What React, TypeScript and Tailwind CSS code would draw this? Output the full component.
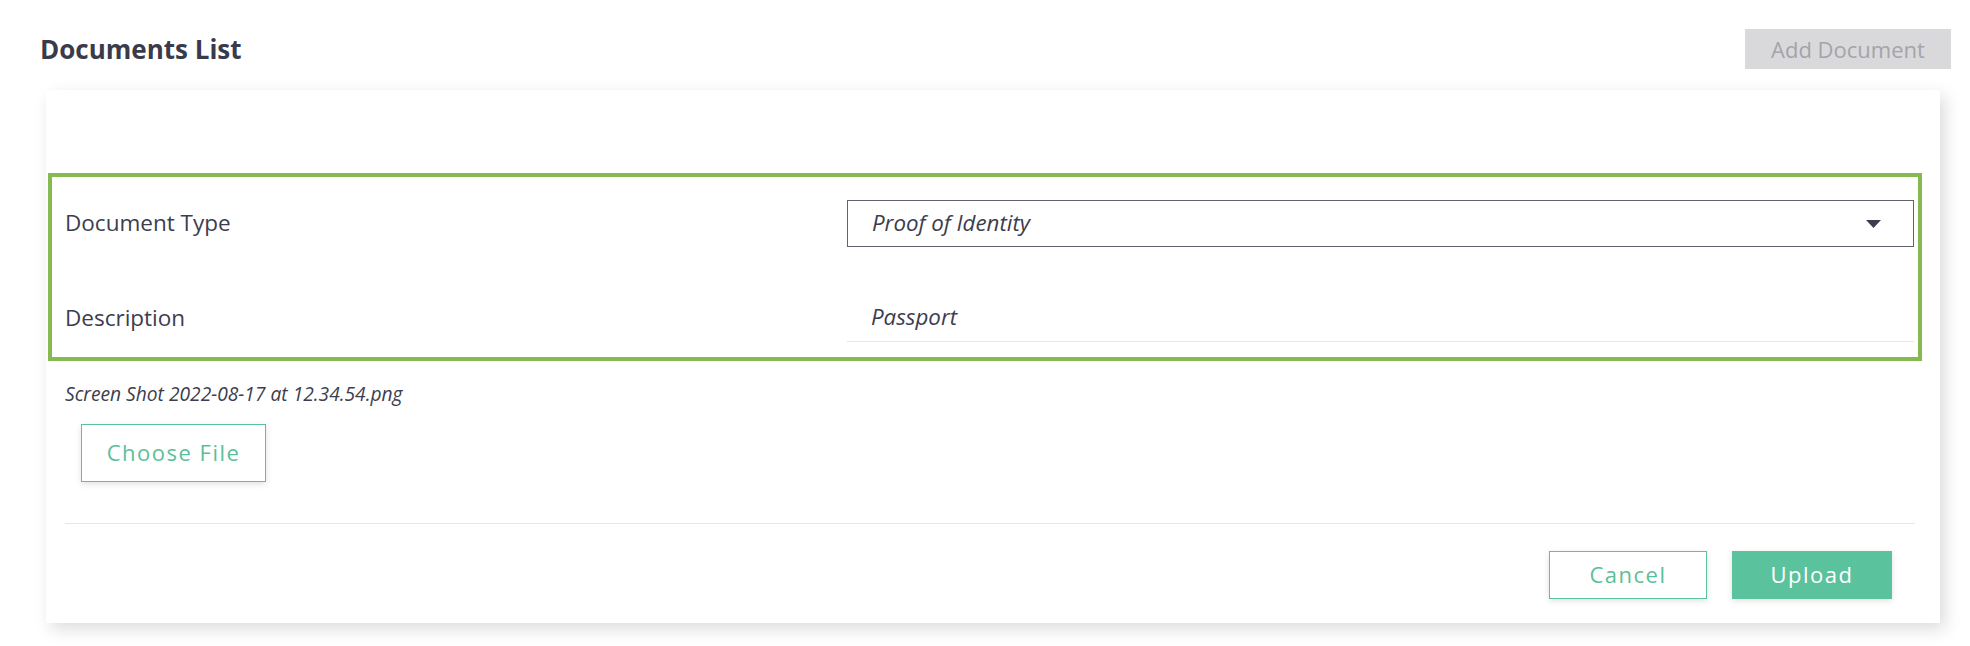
import React from "react";

export default function App() {
  return (
    <div className="w-[1970px] h-[646px] bg-white font-['Open_Sans',sans-serif] overflow-hidden">
      <div className="flex items-center justify-between pl-[40px] pr-[19px] pt-[29px]">
        <h1 className="text-[26px] font-bold leading-none text-[#3a3b4a]">Documents List</h1>
        <button className="w-[206px] h-[40px] bg-[#d9d9db] text-[#a4a4a9] text-[22px] leading-none">
          Add Document
        </button>
      </div>

      <div className="mt-[21px] ml-[46px] w-[1894px] bg-white pt-[83px] pl-[19px] pr-[25px] pb-[24px] shadow-[5px_6px_16px_rgba(0,0,0,0.14)]">
        <div className="ml-[-17px] mr-[-7px] border-4 border-[#86b94f] pt-[23px] pb-[15px] pl-[13px] pr-[4px]">
          <div className="grid grid-cols-[782px_1fr] items-center">
            <div className="text-[22.5px] text-[#3c3d4e] leading-none mt-[-1px]">Document Type</div>
            <div className="h-[47px] border border-[#62626e] pl-[24px] pr-[32px] flex items-center justify-between">
              <span className="text-[22.3px] italic text-[#3c3d4e] leading-none">Proof of Identity</span>
              <svg width="15" height="8" viewBox="0 0 15 8" className="block">
                <path d="M0 0 H15 L7.5 8 Z" fill="#3c3d4e" />
              </svg>
            </div>
          </div>
          <div className="grid grid-cols-[782px_1fr] items-center mt-[48px]">
            <div className="text-[22.5px] text-[#3c3d4e] leading-none mt-[-1px]">Description</div>
            <div className="h-[47px] border-b border-[#e6e6e6] pl-[24px] flex items-center">
              <span className="text-[22.3px] italic text-[#3c3d4e] leading-none mt-[-1px]">Passport</span>
            </div>
          </div>
        </div>

        <div className="mt-[21px] text-[19.2px] italic leading-[24px] text-[#3c3d4e]">
          Screen Shot 2022-08-17 at 12.34.54.png
        </div>

        <button className="mt-[18px] ml-[16px] w-[185px] h-[58px] border border-[#5cc29d] bg-white text-[#5bbf99] text-[22px] tracking-[1.5px] leading-none shadow-[0_2px_6px_rgba(0,0,0,0.12)]">
          <span className="relative top-[-1px]">Choose File</span>
        </button>

        <div className="mt-[41px] h-px bg-[#e7e7e7]" />

        <div className="mt-[27px] flex justify-end gap-[25px] pr-[23px]">
          <button className="w-[158px] h-[48px] border border-[#5cc29d] bg-white text-[#5bbf99] text-[22px] tracking-[1.5px] leading-none shadow-[0_2px_6px_rgba(0,0,0,0.12)]">
            <span className="relative top-[-1px]">Cancel</span>
          </button>
          <button className="w-[160px] h-[48px] bg-[#5bc29e] text-white text-[22px] tracking-[1.5px] leading-none shadow-[0_2px_6px_rgba(0,0,0,0.12)]">
            <span className="relative top-[-1px]">Upload</span>
          </button>
        </div>
      </div>
    </div>
  );
}
